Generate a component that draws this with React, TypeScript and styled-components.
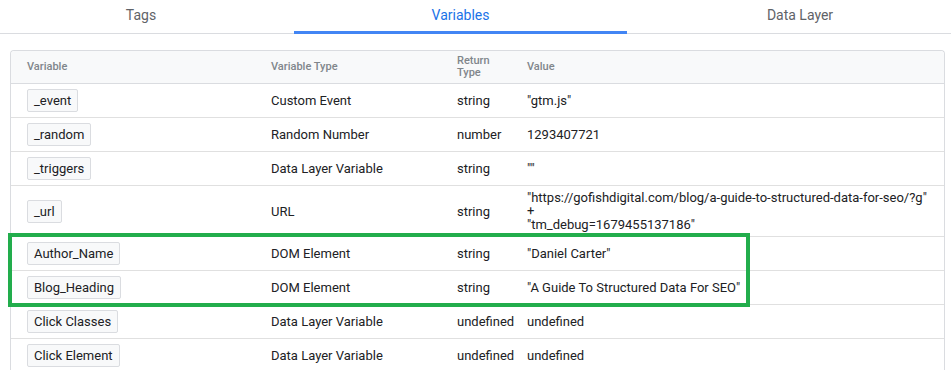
import React from 'react';
import styled, { createGlobalStyle } from 'styled-components';

interface VariableRow {
  name: string;
  type: string;
  returnType: string;
  value: string[];
}

const rows: VariableRow[] = [
  { name: '_event', type: 'Custom Event', returnType: 'string', value: ['"gtm.js"'] },
  { name: '_random', type: 'Random Number', returnType: 'number', value: ['1293407721'] },
  { name: '_triggers', type: 'Data Layer Variable', returnType: 'string', value: ['""'] },
  {
    name: '_url',
    type: 'URL',
    returnType: 'string',
    value: [
      '"https://gofishdigital.com/blog/a-guide-to-structured-data-for-seo/?g"',
      '+',
      '"tm_debug=1679455137186"',
    ],
  },
];

const highlighted: VariableRow[] = [
  { name: 'Author_Name', type: 'DOM Element', returnType: 'string', value: ['"Daniel Carter"'] },
  {
    name: 'Blog_Heading',
    type: 'DOM Element',
    returnType: 'string',
    value: ['"A Guide To Structured Data For SEO"'],
  },
];

const rest: VariableRow[] = [
  { name: 'Click Classes', type: 'Data Layer Variable', returnType: 'undefined', value: ['undefined'] },
  { name: 'Click Element', type: 'Data Layer Variable', returnType: 'undefined', value: ['undefined'] },
];

function Row({ row }: { row: VariableRow }) {
  return (
    <S.Row $tall={row.value.length > 1}>
      <div>
        <S.Chip>{row.name}</S.Chip>
      </div>
      <div>{row.type}</div>
      <div>{row.returnType}</div>
      <S.Value>
        {row.value.map((line, i) => (
          <div key={i}>{line}</div>
        ))}
      </S.Value>
    </S.Row>
  );
}

function App() {
  return (
    <>
      <GlobalStyle />
      <S.Tabs>
        <S.Tab $pad="0 12px 0 0">Tags</S.Tab>
        <S.Tab $active>Variables</S.Tab>
        <S.Tab $pad="0 0 0 22px">Data Layer</S.Tab>
      </S.Tabs>

      <S.Card>
        <S.Header>
          <div>Variable</div>
          <div>Variable Type</div>
          <div>
            Return
            <br />
            Type
          </div>
          <div>Value</div>
        </S.Header>

        {rows.map((row) => (
          <Row key={row.name} row={row} />
        ))}

        <S.Highlight>
          {highlighted.map((row) => (
            <Row key={row.name} row={row} />
          ))}
        </S.Highlight>

        {rest.map((row) => (
          <Row key={row.name} row={row} />
        ))}
      </S.Card>
    </>
  );
}

const GlobalStyle = createGlobalStyle`
  html, body {
    margin: 0;
    padding: 0;
    background: #ffffff;
    font-family: Roboto, "Liberation Sans", Arial, sans-serif;
    color: #202124;
  }
`;

const columns = '244px 186px 70px 1fr';

const S = {
  Tabs: styled.div`
    display: grid;
    grid-template-columns: 294px 333px 1fr;
    height: 34px;
    border-bottom: 1px solid #dadce0;
    box-sizing: border-box;
    margin-bottom: 16px;
  `,

  Tab: styled.div<{ $active?: boolean; $pad?: string }>`
    display: flex;
    align-items: center;
    justify-content: center;
    box-sizing: border-box;
    padding: ${({ $pad }) => $pad || '0'};
    font-size: 14px;
    color: ${({ $active }) => ($active ? '#1a73e8' : '#5f6368')};
    border-bottom: 3px solid ${({ $active }) => ($active ? '#4285f4' : 'transparent')};
    margin-bottom: -1px;
    padding-bottom: 2px;
  `,

  Card: styled.div`
    margin: 0 6px 0 10px;
    border: 1px solid #dadce0;
    border-bottom: none;
    border-radius: 4px 4px 0 0;
  `,

  Header: styled.div`
    display: grid;
    grid-template-columns: ${columns};
    align-items: center;
    height: 32px;
    padding-left: 16px;
    background: #f8f9fa;
    border-bottom: 1px solid #dadce0;
    border-radius: 4px 4px 0 0;
    font-size: 11px;
    font-weight: 500;
    line-height: 12px;
    color: #80868b;
  `,

  Row: styled.div<{ $tall?: boolean }>`
    display: grid;
    grid-template-columns: ${columns};
    align-items: center;
    height: ${({ $tall }) => ($tall ? '50px' : '33px')};
    padding-left: 16px;
    border-bottom: 1px solid #e0e0e0;
    font-size: 13px;
    color: #202124;
  `,

  Chip: styled.span`
    display: inline-block;
    padding: 3px 6px;
    line-height: 15px;
    background: #f8f9fa;
    border: 1px solid #dadce0;
    border-radius: 2px;
    font-size: 13px;
    color: #202124;
  `,

  Value: styled.div`
    line-height: 13.5px;
    white-space: nowrap;
  `,

  Highlight: styled.div`
    position: relative;

    &::after {
      content: '';
      position: absolute;
      top: -4px;
      bottom: -2px;
      left: -3px;
      width: 742px;
      border: 4px solid #22ad4c;
      box-sizing: border-box;
      pointer-events: none;
    }
  `,
};

export default App;
